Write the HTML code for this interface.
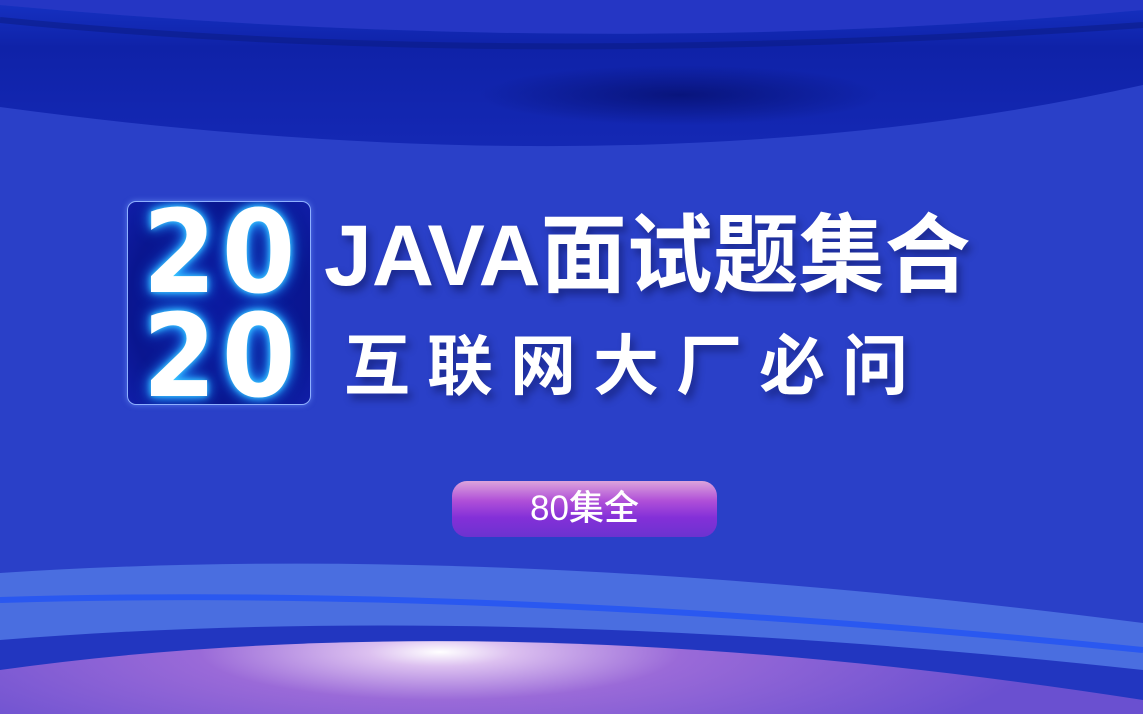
<!DOCTYPE html>
<html><head><meta charset="utf-8"><style>
body{margin:0;width:1143px;height:714px;overflow:hidden;background:#2a40c8;font-family:"Liberation Sans","Noto Sans CJK SC",sans-serif;position:relative}
svg.bg{position:absolute;left:0;top:0}
.box{position:absolute;left:127px;top:201px;width:182px;height:202px;border-radius:9px;border:1.5px solid #8fb0ff;background:radial-gradient(ellipse at 50% 50%,#0c1aa0,#0a1690 70%,#101ea8);box-shadow:0 0 6px rgba(120,160,255,.6);overflow:hidden}
.num{position:absolute;left:0;width:182px;text-align:center;color:#fff;font-weight:bold;font-size:115px;line-height:1;letter-spacing:6px;text-indent:6px;transform:scaleX(.92);text-shadow:0 0 6px #3cd0ff,0 0 12px #2aa8ff,0 0 18px #1a80ff;font-family:"DejaVu Sans",sans-serif}
.t1{position:absolute;left:324px;top:206px;color:#fff;font-weight:bold;font-size:86px;line-height:100px;white-space:nowrap;text-shadow:4px 6px 8px rgba(0,0,40,.35)}
.t2{position:absolute;left:344px;top:326px;color:#fff;font-weight:bold;font-size:66px;line-height:80px;letter-spacing:17px;white-space:nowrap;text-shadow:4px 6px 8px rgba(0,0,40,.35)}
.pill{position:absolute;left:452px;top:481px;width:265px;height:56px;border-radius:15px;background:linear-gradient(#dca4dc,#b050d8 35%,#8430d8 65%,#6c32d0);color:#fff;font-size:35px;font-weight:500;line-height:56px;text-align:center}
</style></head><body>
<svg class="bg" width="1143" height="714" viewBox="0 0 1143 714">
<defs>
<linearGradient id="dk" x1="0" y1="0" x2="0" y2="1"><stop offset="0" stop-color="#1530c0"/><stop offset=".3" stop-color="#0f22a8"/><stop offset="1" stop-color="#1428b4"/></linearGradient>
<radialGradient id="sh" cx="680" cy="95" r="200" gradientUnits="userSpaceOnUse" gradientTransform="translate(680 95) scale(1 .15) translate(-680 -95)"><stop offset="0" stop-color="#061070" stop-opacity=".8"/><stop offset="1" stop-color="#061070" stop-opacity="0"/></radialGradient>
<radialGradient id="gl" cx="440" cy="652" r="600" gradientUnits="userSpaceOnUse" gradientTransform="translate(440 652) scale(1 .2) translate(-440 -652)"><stop offset="0" stop-color="#fff"/><stop offset=".12" stop-color="#dcc0f0"/><stop offset=".4" stop-color="#9a6ad8"/><stop offset="1" stop-color="#6a50d0"/></radialGradient>
</defs>
<rect width="1143" height="714" fill="#2a40c8"/>
<path d="M0 0H1143V10Q600 60 0 5Z" fill="#2536c4"/>
<path d="M0 5Q600 60 1143 10V85Q650 195 0 107Z" fill="url(#dk)"/>
<path d="M0 20Q500 70 1143 25" stroke="#0a1a80" stroke-width="6" fill="none" opacity=".5"/>
<rect x="0" y="60" width="1143" height="80" fill="url(#sh)"/>
<path d="M0 573Q500 540 1143 623V714H0Z" fill="#4a6ee0"/>
<path d="M0 600Q500 585 1143 650" stroke="#2a58f0" stroke-width="6" fill="none"/>
<path d="M0 640Q500 600 1143 670V714H0Z" fill="#2236c0"/>
<path d="M0 670Q500 600 1143 700V714H0Z" fill="url(#gl)"/>
</svg>
<div class="box"><div class="num" style="top:-6px">20</div><div class="num" style="top:98px">20</div></div>
<div class="t1">JAVA面试题集合</div>
<div class="t2">互联网大厂必问</div>
<div class="pill">80集全</div>
</body></html>
